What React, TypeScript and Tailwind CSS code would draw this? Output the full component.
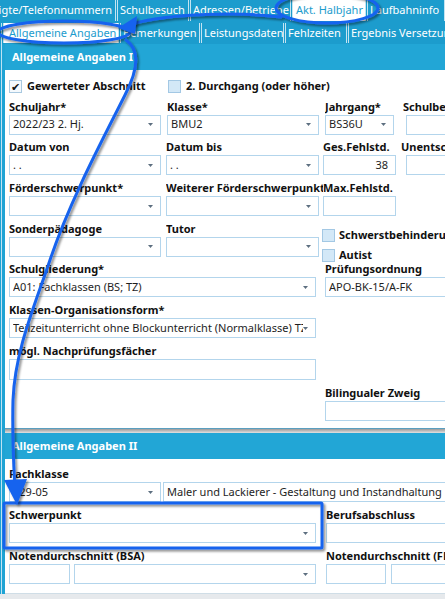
import React from "react";

function Dd() {
  return (
    <svg width="5" height="3" viewBox="0 0 5 3" className="shrink-0">
      <path d="M0 0H5L2.5 3Z" fill="#5d6f80" />
    </svg>
  );
}

function Field({
  cls = "",
  text = "",
  dd = false,
  right = false,
}: {
  cls?: string;
  text?: string;
  dd?: boolean;
  right?: boolean;
}) {
  return (
    <div
      className={`h-[20px] shrink-0 border border-[#b3d5ec] bg-white flex items-center pl-[3px] pr-[7px] text-[11px] text-[#1e1e1e] overflow-hidden ${cls}`}
    >
      <span className={`flex-1 whitespace-nowrap overflow-hidden ${right ? "text-right" : ""}`}>{text}</span>
      {dd && <Dd />}
    </div>
  );
}

function Label({ children, cls = "" }: { children: React.ReactNode; cls?: string }) {
  return (
    <div className={`h-[16px] leading-[16px] text-[11px] font-bold text-[#111] whitespace-nowrap overflow-hidden ${cls}`}>
      {children}
    </div>
  );
}

function Check({ checked = false }: { checked?: boolean }) {
  return (
    <div
      className={`w-[13px] h-[13px] shrink-0 border flex items-center justify-center text-[11px] leading-none ${
        checked ? "border-[#a9c9e0] bg-[#f4f9fd] text-[#111]" : "border-[#a3c8e4] bg-[#d3e8f7]"
      }`}
    >
      {checked ? "✔" : ""}
    </div>
  );
}

export default function App() {
  return (
    <div className="relative w-[445px] h-[599px] overflow-hidden bg-[#e6e9ec] font-['Noto_Sans',sans-serif] text-[11px]">
      {/* Tab row 1 */}
      <div className="h-[22px] bg-[#1c9ccd] flex items-start text-white text-[11px]">
        <div className="w-[116px] h-[21px] shrink-0 border-r border-[#c3e4f2] flex items-center justify-end pr-[3px] overflow-hidden">
          <span className="whitespace-nowrap shrink-0">Erziehungsberechtigte/Telefonnummern</span>
        </div>
        <div className="ml-[1px] w-[72px] h-[21px] shrink-0 border-x border-[#c3e4f2] flex items-center px-[2px] overflow-hidden whitespace-nowrap">
          Schulbesuch
        </div>
        <div className="ml-[1px] w-[101px] h-[21px] shrink-0 border-x border-[#c3e4f2] flex items-center px-[2px] overflow-hidden whitespace-nowrap">
          Adressen/Betriebe
        </div>
        <div className="ml-[1px] w-[74px] h-[21px] shrink-0 bg-white border-x border-[#c3e4f2] flex items-center px-[3px] overflow-hidden whitespace-nowrap text-[#1c9ccd]">
          Akt. Halbjahr
        </div>
        <div className="ml-[1px] w-[78px] h-[21px] shrink-0 border-x border-[#c3e4f2] flex items-center px-[2px] overflow-hidden whitespace-nowrap">
          Laufbahninfo
        </div>
        <div className="ml-[1px] w-[60px] h-[21px] shrink-0 border-x border-[#c3e4f2]" />
      </div>
      {/* Tab row 2 */}
      <div className="h-[22px] bg-[#1c9ccd] flex items-start pt-[1px] text-white text-[11px]">
        <div className="w-[1px] h-[21px] ml-[1px] bg-[#bfe3f2] shrink-0" />
        <div className="ml-[1px] w-[116px] h-[20px] shrink-0 bg-white border-x border-[#c3e4f2] flex items-center px-[5px] overflow-hidden whitespace-nowrap text-[#1c9ccd]">
          Allgemeine Angaben
        </div>
        <div className="ml-[1px] w-[80px] h-[20px] shrink-0 border-x border-[#c3e4f2] flex items-center px-[2px] overflow-hidden whitespace-nowrap">
          Bemerkungen
        </div>
        <div className="ml-[1px] w-[83px] h-[20px] shrink-0 border-x border-[#c3e4f2] flex items-center px-[2px] overflow-hidden whitespace-nowrap">
          Leistungsdaten
        </div>
        <div className="ml-[1px] w-[62px] h-[20px] shrink-0 border-x border-[#c3e4f2] flex items-center px-[2px] overflow-hidden whitespace-nowrap">
          Fehlzeiten
        </div>
        <div className="ml-[1px] w-[120px] h-[20px] shrink-0 border-x border-[#c3e4f2] flex items-center px-[2px] overflow-hidden whitespace-nowrap">
          Ergebnis Versetzung
        </div>
      </div>

      {/* Main area with left strip */}
      <div className="flex">
        <div className="w-[5px] shrink-0 bg-[#1fa3d4] flex">
          <div className="ml-[1px] w-[1px] bg-[#bfe3f2]" />
        </div>
        <div className="flex-1 flex flex-col">
          {/* Header I */}
          <div className="h-[26px] bg-[#22a6d6] flex items-center pl-[7px] text-white font-bold text-[11px]">
            Allgemeine Angaben I
          </div>
          {/* Body I */}
          <div className="h-[358px] bg-white pl-[4px] pt-[8px] flex flex-col gap-y-[4.7px]">
            <div className="h-[16px] flex items-center">
              <div className="w-[158px] flex items-center gap-[5px]">
                <Check checked />
                <span className="font-bold text-[#111] whitespace-nowrap">Gewerteter Abschnitt</span>
              </div>
              <div className="ml-[1px] flex items-center gap-[5px]">
                <Check />
                <span className="font-bold text-[#111] whitespace-nowrap">2. Durchgang (oder höher)</span>
              </div>
            </div>
            {/* Row 1 */}
            <div className="flex h-[36px]">
              <div className="w-[158px] shrink-0">
                <Label>Schuljahr*</Label>
                <Field cls="w-[152px]" text="2022/23 2. Hj." dd />
              </div>
              <div className="w-[158px] shrink-0">
                <Label>Klasse*</Label>
                <Field cls="w-[152px]" text="BMU2" dd />
              </div>
              <div className="w-[78px] shrink-0">
                <Label>Jahrgang*</Label>
                <Field cls="w-[69px]" text="BS36U" dd />
              </div>
              <div className="w-[120px] shrink-0">
                <Label>Schulbesuchsjahr</Label>
                <Field cls="w-[100px] ml-[3px]" />
              </div>
            </div>
            {/* Row 2 */}
            <div className="flex h-[36px]">
              <div className="w-[157px] shrink-0">
                <Label>Datum von</Label>
                <Field cls="w-[152px]" text=" .  ." dd />
              </div>
              <div className="w-[157px] shrink-0">
                <Label>Datum bis</Label>
                <Field cls="w-[153px]" text=" .  ." dd />
              </div>
              <div className="w-[78px] shrink-0">
                <Label>Ges.Fehlstd.</Label>
                <Field cls="w-[73px]" text="38" right />
              </div>
              <div className="w-[120px] shrink-0">
                <Label>Unentschuldigt</Label>
                <Field cls="w-[100px] ml-[5px]" />
              </div>
            </div>
            {/* Row 3 */}
            <div className="flex h-[36px]">
              <div className="w-[157px] shrink-0">
                <Label>Förderschwerpunkt*</Label>
                <Field cls="w-[152px]" dd />
              </div>
              <div className="w-[157px] shrink-0">
                <Label>Weiterer Förderschwerpunkt</Label>
                <Field cls="w-[153px]" dd />
              </div>
              <div className="w-[78px] shrink-0">
                <Label>Max.Fehlstd.</Label>
                <Field cls="w-[73px]" />
              </div>
            </div>
            {/* Row 4 */}
            <div className="flex h-[36px]">
              <div className="w-[157px] shrink-0">
                <Label>Sonderpädagoge</Label>
                <Field cls="w-[152px]" dd />
              </div>
              <div className="w-[156px] shrink-0">
                <Label>Tutor</Label>
                <Field cls="w-[153px]" dd />
              </div>
              <div className="pt-[6px] flex flex-col gap-[4px]">
                <div className="flex items-center gap-[4px]">
                  <Check />
                  <span className="font-bold text-[#111] whitespace-nowrap">Schwerstbehinderung</span>
                </div>
                <div className="flex items-center gap-[4px]">
                  <Check />
                  <span className="font-bold text-[#111] whitespace-nowrap">Autist</span>
                </div>
              </div>
            </div>
            {/* Row 5 */}
            <div className="flex h-[36px]">
              <div className="w-[316px] shrink-0">
                <Label>Schulgliederung*</Label>
                <Field cls="w-[307px]" text="A01: Fachklassen (BS; TZ)" dd />
              </div>
              <div className="w-[150px] shrink-0">
                <Label>Prüfungsordnung</Label>
                <Field cls="w-[150px]" text="APO-BK-15/A-FK" />
              </div>
            </div>
            {/* Row 6 */}
            <div className="flex h-[36px]">
              <div className="w-[316px] shrink-0">
                <Label>Klassen-Organisationsform*</Label>
                <Field cls="w-[307px]" text="Teilzeitunterricht ohne Blockunterricht (Normalklasse) TZ" dd />
              </div>
            </div>
            {/* Row 7 */}
            <div className="flex h-[37px]">
              <div className="w-[316px] shrink-0">
                <Label>mögl. Nachprüfungsfächer</Label>
                <Field cls="w-[307px] h-[21px]" />
              </div>
            </div>
            {/* Row 8 */}
            <div className="flex h-[36px]">
              <div className="w-[316px] shrink-0" />
              <div className="w-[150px] shrink-0">
                <Label>Bilingualer Zweig</Label>
                <Field cls="w-[150px]" />
              </div>
            </div>
          </div>
          {/* Separator */}
          <div className="h-[1px] bg-[#5a9fc0]" />
          <div className="h-[4px] bg-gradient-to-b from-[#9b9b9b] to-[#e2e2e2]" />
          {/* Header II */}
          <div className="h-[26px] bg-[#22a6d6] flex items-center pl-[7px] text-white font-bold text-[11px]">
            Allgemeine Angaben II
          </div>
          {/* Body II */}
          <div className="h-[134px] bg-white pl-[4px] pt-[7px] flex flex-col gap-y-[5px]">
            <div className="flex h-[36px]">
              <div className="shrink-0">
                <Label>Fachklasse</Label>
                <div className="flex">
                  <Field cls="w-[152px]" text="129-05" dd />
                  <Field cls="w-[290px] ml-[2px]" text="Maler und Lackierer - Gestaltung und Instandhaltung" />
                </div>
              </div>
            </div>
            <div className="flex h-[36px]">
              <div className="w-[317px] shrink-0">
                <Label>Schwerpunkt</Label>
                <Field cls="w-[307px]" dd />
              </div>
              <div className="w-[150px] shrink-0">
                <Label>Berufsabschluss</Label>
                <Field cls="w-[150px]" />
              </div>
            </div>
            <div className="flex h-[36px]">
              <div className="w-[317px] shrink-0">
                <Label>Notendurchschnitt (BSA)</Label>
                <div className="flex">
                  <Field cls="w-[61px]" />
                  <Field cls="w-[242px] ml-[4px]" dd />
                </div>
              </div>
              <div className="w-[150px] shrink-0">
                <Label>Notendurchschnitt (FHR)</Label>
                <div className="flex">
                  <Field cls="w-[60px]" />
                  <Field cls="w-[80px] ml-[5px]" />
                </div>
              </div>
            </div>
          </div>
          <div className="h-[1px] bg-[#cfdde6]" />
        </div>
      </div>

      {/* Annotation overlay */}
      <svg
        className="absolute inset-0 pointer-events-none"
        width="445"
        height="599"
        viewBox="0 0 445 599"
      >
        <defs>
          <filter id="sh" x="-10%" y="-10%" width="120%" height="120%">
            <feDropShadow dx="1.8" dy="2" stdDeviation="1.2" floodColor="#000" floodOpacity="0.45" />
          </filter>
        </defs>
        <g filter="url(#sh)" stroke="#1763ee" strokeWidth="3" fill="none" strokeLinecap="round">
          <ellipse cx="327" cy="8" rx="51" ry="15" />
          <path d="M281 17 C 240 12, 170 13, 132 24" />
          <ellipse cx="64" cy="32" rx="66" ry="11" />
          <path d="M126 40 C 140 50, 138 70, 125 95 C 105 135, 70 200, 50 260 C 35 305, 15 350, 13 400 C 12 440, 14 470, 15 490" />
          <rect x="4" y="503" width="318" height="45" rx="1" />
        </g>
        <g filter="url(#sh)" fill="#1763ee">
          <path d="M118 28 L137 16 L135 34 Z" />
          <path d="M17 505 L4 480 L27 479 Z" />
        </g>
      </svg>
    </div>
  );
}
